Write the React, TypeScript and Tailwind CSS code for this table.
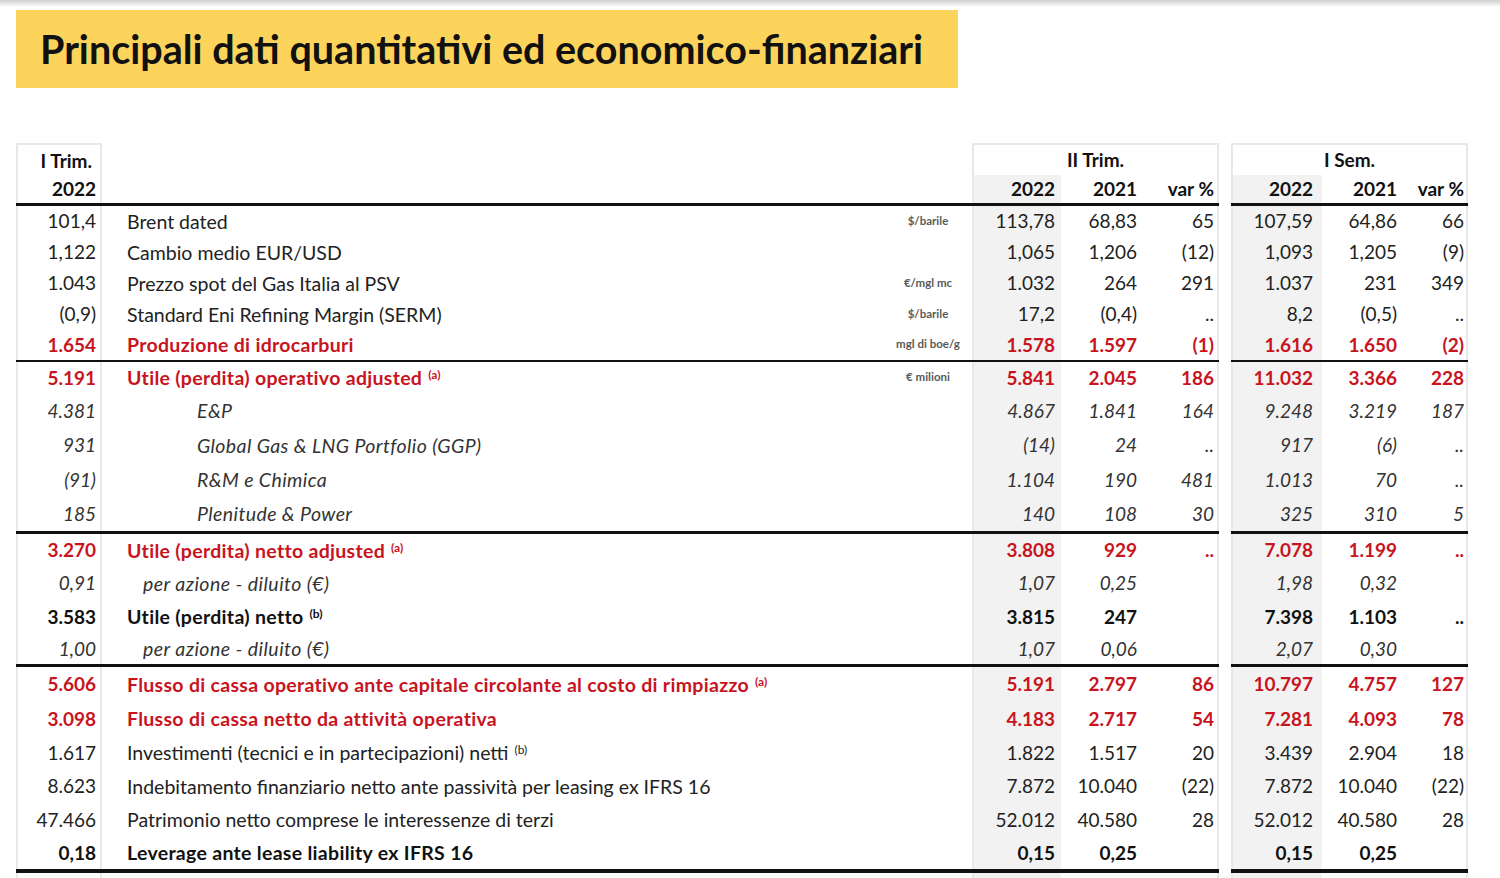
import React from 'react';

type Kind = 'normal' | 'red' | 'bold' | 'italic' | 'sub';

type Row = {
  a: string;
  label: string;
  sup?: string;
  unit?: string;
  vals: string[];
  kind: Kind;
  h: string;
};

const grid = 'grid grid-cols-[86px_870px_89px_82px_76px_12px_91px_81px_65px]';
const edge = 'border-[#e8e8e8]';

const groups: Row[][] = [
  [
    { a: '101,4', label: 'Brent dated', unit: '$/barile', vals: ['113,78', '68,83', '65', '107,59', '64,86', '66'], kind: 'normal', h: 'h-[31px]' },
    { a: '1,122', label: 'Cambio medio EUR/USD', vals: ['1,065', '1,206', '(12)', '1,093', '1,205', '(9)'], kind: 'normal', h: 'h-[31px]' },
    { a: '1.043', label: 'Prezzo spot del Gas Italia al PSV', unit: '€/mgl mc', vals: ['1.032', '264', '291', '1.037', '231', '349'], kind: 'normal', h: 'h-[31px]' },
    { a: '(0,9)', label: 'Standard Eni Refining Margin (SERM)', unit: '$/barile', vals: ['17,2', '(0,4)', '..', '8,2', '(0,5)', '..'], kind: 'normal', h: 'h-[31px]' },
    { a: '1.654', label: 'Produzione di idrocarburi', unit: 'mgl di boe/g', vals: ['1.578', '1.597', '(1)', '1.616', '1.650', '(2)'], kind: 'red', h: 'h-[30px]' },
  ],
  [
    { a: '5.191', label: 'Utile (perdita) operativo adjusted', sup: '(a)', unit: '€ milioni', vals: ['5.841', '2.045', '186', '11.032', '3.366', '228'], kind: 'red', h: 'h-[32px]' },
    { a: '4.381', label: 'E&P', vals: ['4.867', '1.841', '164', '9.248', '3.219', '187'], kind: 'italic', h: 'h-[34px]' },
    { a: '931', label: 'Global Gas & LNG Portfolio (GGP)', vals: ['(14)', '24', '..', '917', '(6)', '..'], kind: 'italic', h: 'h-[35px]' },
    { a: '(91)', label: 'R&M e Chimica', vals: ['1.104', '190', '481', '1.013', '70', '..'], kind: 'italic', h: 'h-[34px]' },
    { a: '185', label: 'Plenitude & Power', vals: ['140', '108', '30', '325', '310', '5'], kind: 'italic', h: 'h-[34px]' },
  ],
  [
    { a: '3.270', label: 'Utile (perdita) netto adjusted', sup: '(a)', vals: ['3.808', '929', '..', '7.078', '1.199', '..'], kind: 'red', h: 'h-[33px]' },
    { a: '0,91', label: 'per azione - diluito (€)', vals: ['1,07', '0,25', '', '1,98', '0,32', ''], kind: 'sub', h: 'h-[33px]' },
    { a: '3.583', label: 'Utile (perdita) netto', sup: '(b)', vals: ['3.815', '247', '', '7.398', '1.103', '..'], kind: 'bold', h: 'h-[34px]' },
    { a: '1,00', label: 'per azione - diluito (€)', vals: ['1,07', '0,06', '', '2,07', '0,30', ''], kind: 'sub', h: 'h-[30px]' },
  ],
  [
    { a: '5.606', label: 'Flusso di cassa operativo ante capitale circolante al costo di rimpiazzo', sup: '(a)', vals: ['5.191', '2.797', '86', '10.797', '4.757', '127'], kind: 'red', h: 'h-[35px]' },
    { a: '3.098', label: 'Flusso di cassa netto da attività operativa', vals: ['4.183', '2.717', '54', '7.281', '4.093', '78'], kind: 'red', h: 'h-[34px]' },
    { a: '1.617', label: 'Investimenti (tecnici e in partecipazioni) netti', sup: '(b)', vals: ['1.822', '1.517', '20', '3.439', '2.904', '18'], kind: 'normal', h: 'h-[34px]' },
    { a: '8.623', label: 'Indebitamento finanziario netto ante passività per leasing ex IFRS 16', vals: ['7.872', '10.040', '(22)', '7.872', '10.040', '(22)'], kind: 'normal', h: 'h-[33px]' },
    { a: '47.466', label: 'Patrimonio netto comprese le interessenze di terzi', vals: ['52.012', '40.580', '28', '52.012', '40.580', '28'], kind: 'normal', h: 'h-[34px]' },
    { a: '0,18', label: 'Leverage ante lease liability ex IFRS 16', vals: ['0,15', '0,25', '', '0,15', '0,25', ''], kind: 'bold', h: 'h-[32px]' },
  ],
];

const kindText: Record<Kind, string> = {
  normal: 'text-[#222222]',
  red: 'text-[#c8141e] font-bold',
  bold: 'text-[#111111] font-bold',
  italic: 'text-[#333333] italic',
  sub: 'text-[#333333] italic',
};

// letter spacing of the label, so that its width matches the screenshot
const kindTrack: Record<Kind, string> = {
  normal: '',
  red: 'tracking-[0.3px]',
  bold: 'tracking-[0.3px]',
  italic: 'tracking-[0.4px]',
  sub: 'tracking-[0.45px]',
};

// right padding of each value column, as measured on the screenshot
const valCls = [
  'bg-[#f2f2f2] border-l-2 pr-[6px]',
  'pr-[6px]',
  'border-r-2 pr-[3px]',
  'bg-[#f2f2f2] border-l-2 pr-[9px]',
  'pr-[6px]',
  'border-r-2 pr-[2px]',
];

function Divider({ h }: { h: string }) {
  return (
    <div className={grid}>
      <div className={`col-span-5 bg-[#111111] ${h}`} />
      <div />
      <div className={`col-span-3 bg-[#111111] ${h}`} />
    </div>
  );
}

function DataRow({ row }: { row: Row }) {
  const t = kindText[row.kind];
  const indent = row.kind === 'italic' ? 'pl-[95px]' : row.kind === 'sub' ? 'pl-[41px]' : 'pl-[25px]';
  return (
    <div className={`${grid} ${row.h} text-[19px] ${t}`}>
      <div className={`flex items-center justify-end border-x-2 ${edge} pr-[4px]`}>{row.a}</div>
      <div className={`flex items-center text-[19.5px] ${indent}`}>
        <span className={`flex-1 whitespace-nowrap ${kindTrack[row.kind]}`}>
          {row.label}
          {row.sup && <sup className="ml-[6px] text-[12px] tracking-normal">{row.sup}</sup>}
        </span>
        <span className="w-[80px] mr-[4px] text-center text-[11.5px] font-bold not-italic text-[#5a5a5a] -mt-[2px]">
          {row.unit}
        </span>
      </div>
      {row.vals.slice(0, 3).map((v, i) => (
        <div key={i} className={`flex items-center justify-end ${edge} ${valCls[i]}`}>{v}</div>
      ))}
      <div />
      {row.vals.slice(3).map((v, i) => (
        <div key={i} className={`flex items-center justify-end ${edge} ${valCls[i + 3]}`}>{v}</div>
      ))}
    </div>
  );
}

export default function App() {
  return (
    <div className="w-[1500px] h-[878px] overflow-hidden bg-white font-['Lato',sans-serif]">
      <div className="h-[7px] bg-gradient-to-b from-[#cfcfcf] to-white" />
      <div className="ml-[16px] mt-[3px] w-[942px] h-[78px] bg-[#fcd45c] flex items-center pl-[24px]">
        <h1 className="text-[39.5px] font-bold text-[#111111]">
          Principali dati quantitativi ed economico-finanziari
        </h1>
      </div>

      <div className="ml-[16px] mt-[55px] w-[1452px]">
        <div className={`${grid} h-[32px] text-[19px] font-bold text-[#111111]`}>
          <div className={`flex items-end justify-end border-x-2 border-t-2 ${edge} pr-[8px]`}>I Trim.</div>
          <div />
          <div className={`col-span-3 flex items-end justify-center border-x-2 border-t-2 ${edge} pb-[1px]`}>II Trim.</div>
          <div />
          <div className={`col-span-3 flex items-end justify-center border-x-2 border-t-2 ${edge} pb-[1px]`}>I Sem.</div>
        </div>
        <div className={`${grid} h-[28px] text-[19px] font-bold text-[#111111]`}>
          <div className={`flex items-end justify-end border-x-2 ${edge} pr-[4px]`}>2022</div>
          <div />
          {['2022', '2021', 'var %'].map((v, i) => (
            <div key={i} className={`flex items-end justify-end ${edge} ${valCls[i]}`}>{v}</div>
          ))}
          <div />
          {['2022', '2021', 'var %'].map((v, i) => (
            <div key={i} className={`flex items-end justify-end ${edge} ${valCls[i + 3]}`}>{v}</div>
          ))}
        </div>
        <Divider h="h-[3px]" />

        {groups.map((g, gi) => (
          <React.Fragment key={gi}>
            {g.map((row, ri) => (
              <DataRow key={ri} row={row} />
            ))}
            <Divider h={gi === 0 ? 'h-[2px]' : gi === 3 ? 'h-[4px]' : 'h-[3px]'} />
          </React.Fragment>
        ))}

        <div className={`${grid} h-[10px]`}>
          <div className={`border-x-2 ${edge}`} />
          <div />
          <div className={`bg-[#f2f2f2] border-l-2 ${edge}`} />
          <div />
          <div className={`border-r-2 ${edge}`} />
          <div />
          <div className={`bg-[#f2f2f2] border-l-2 ${edge}`} />
          <div />
          <div className={`border-r-2 ${edge}`} />
        </div>
      </div>
    </div>
  );
}
